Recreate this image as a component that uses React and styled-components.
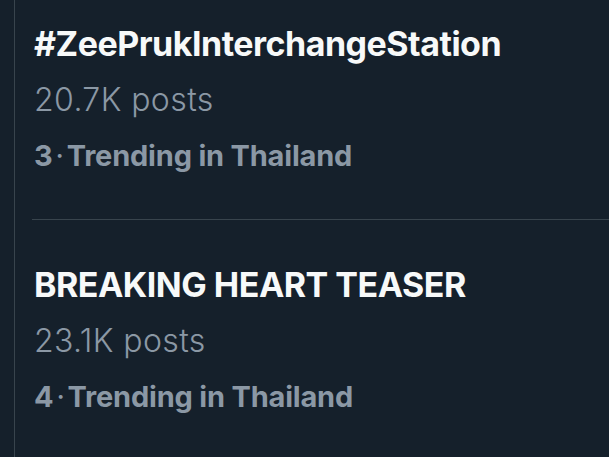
import React from "react";
import styled, { createGlobalStyle } from "styled-components";

const Global = createGlobalStyle`
  html, body {
    margin: 0;
    background: #15202b;
    overflow: hidden;
  }
`;

const Column = styled.div`
  margin-left: 14px;
  height: 457px;
  border-left: 1px solid #38444d;
  overflow: hidden;
  font-family: Inter, "Noto Sans", sans-serif;
`;

const List = styled.div`
  margin-top: -21px;
`;

const Trend = styled.div`
  margin-left: 17px;
  padding: 37px 0 35px 2px;
  border-bottom: ${(p) => (p.last ? "none" : "1px solid #38444d")};
`;

const Title = styled.div`
  color: #f7f9f9;
  font-size: 34px;
  font-weight: 700;
  line-height: 56px;
  letter-spacing: -0.5px;
  white-space: nowrap;
`;

const Posts = styled.div`
  color: #8b98a5;
  font-size: 32px;
  font-weight: 300;
  line-height: 56px;
  letter-spacing: 0.4px;
`;

const Meta = styled.div`
  color: #8b98a5;
  font-size: 29px;
  font-weight: 700;
  line-height: 56px;
  letter-spacing: -0.2px;
`;

const Dot = styled.span`
  margin: 0 3px;
  font-weight: 400;
`;

const trends = [
  { title: "#ZeePrukInterchangeStation", posts: "20.7K posts", rank: 3 },
  { title: "BREAKING HEART TEASER", posts: "23.1K posts", rank: 4 },
];

export default function App() {
  return (
    <>
      <Global />
      <Column>
        <List>
          {trends.map((t, i) => (
            <Trend key={t.title} last={i === trends.length - 1}>
              <Title>{t.title}</Title>
              <Posts>{t.posts}</Posts>
              <Meta>
                {t.rank}
                <Dot>·</Dot>
                Trending in Thailand
              </Meta>
            </Trend>
          ))}
        </List>
      </Column>
    </>
  );
}
